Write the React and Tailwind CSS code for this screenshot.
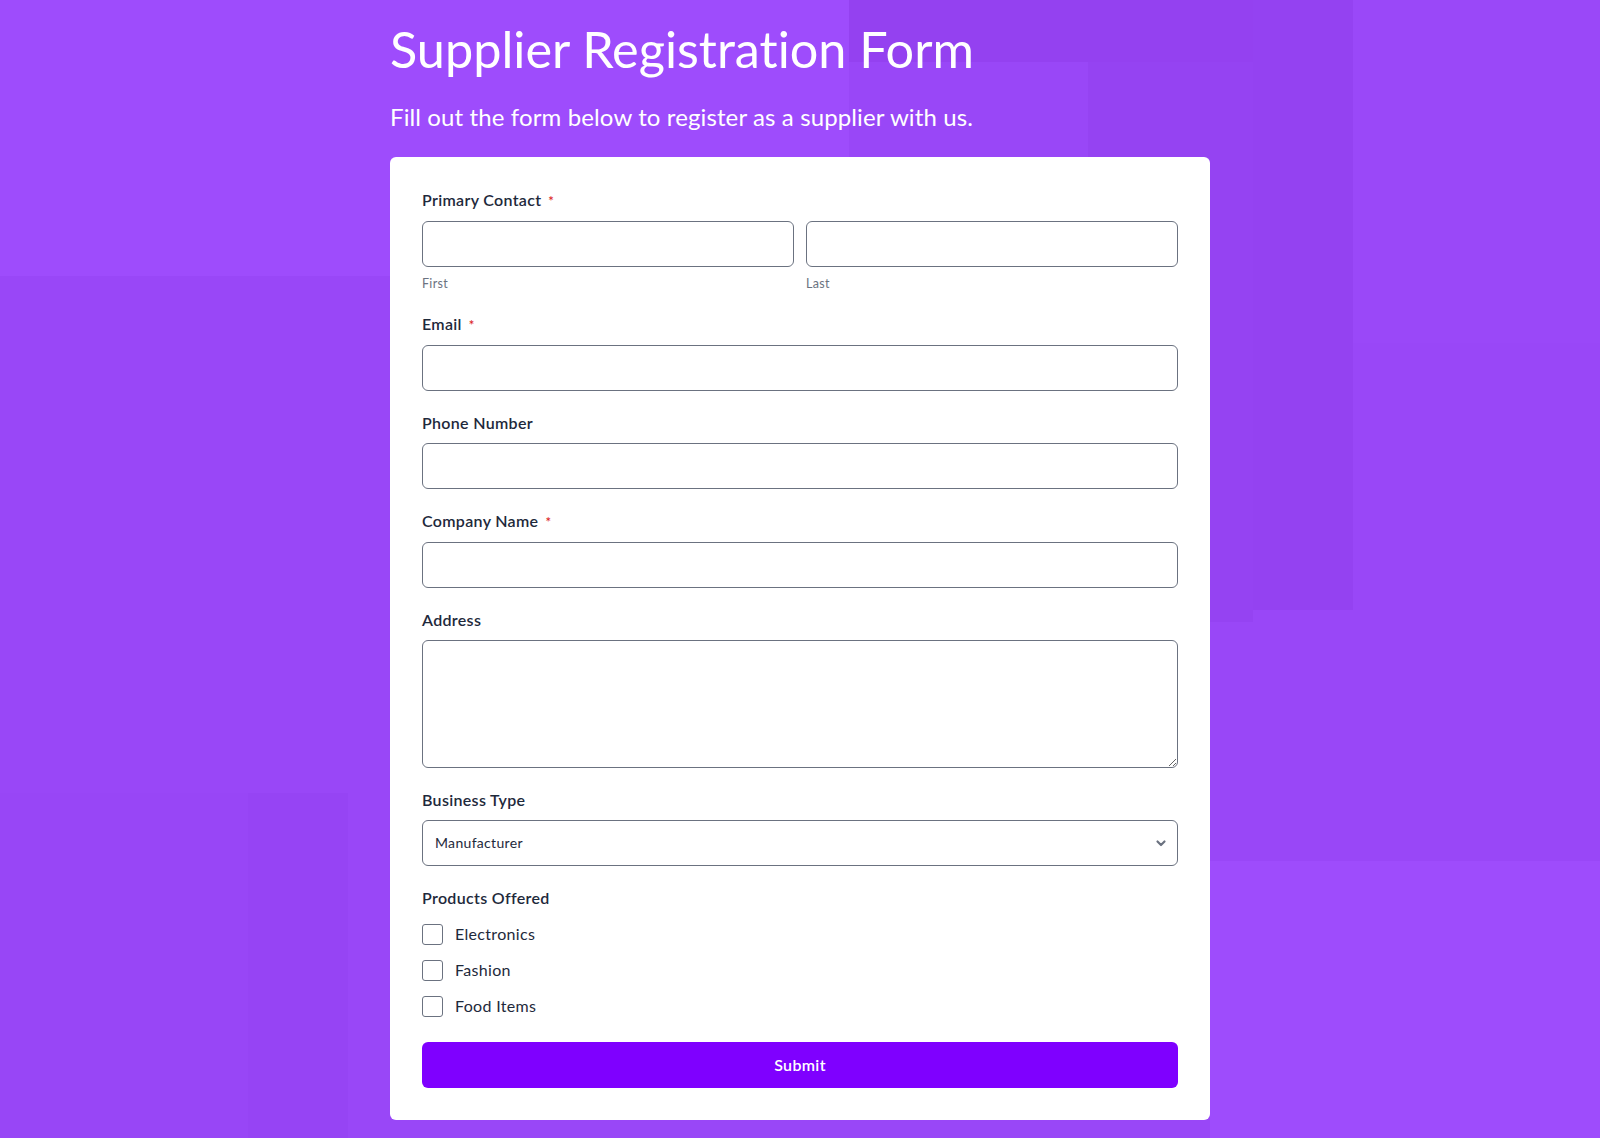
import React, { useState } from 'react';

const bgBlocks = [
  'left-0 top-0 w-[849px] h-[276px] bg-[#9e4cfc]',
  'left-[849px] top-0 w-[405px] h-[62px] bg-[#9441f0]',
  'left-[1088px] top-[62px] w-[165px] h-[560px] bg-[#9543f2]',
  'left-[1253px] top-0 w-[100px] h-[610px] bg-[#9442f1]',
  'left-[1353px] top-0 w-[247px] h-[343px] bg-[#9a48f8]',
  'left-0 top-[793px] w-[248px] h-[345px] bg-[#9846f6]',
  'left-[248px] top-[793px] w-[100px] h-[345px] bg-[#9644f4]',
  'left-[1210px] top-[861px] w-[390px] h-[277px] bg-[#9e4cfc]',
];

const Label = ({ children, required }) => (
  <label className="block mb-2 text-base leading-6 font-semibold text-[#1e293b]">
    {children}
    {required && <span className="ml-[7px] text-[13px] text-[#dc2626]">*</span>}
  </label>
);

const inputCls =
  'block w-full h-[46px] px-3 rounded-md border border-[#6b7280] bg-white text-sm text-[#1e293b] outline-none';

const SupplierForm = () => {
  const [products, setProducts] = useState({});

  const toggle = (name) => setProducts({ ...products, [name]: !products[name] });

  return (
    <div className="relative min-h-screen overflow-hidden bg-[#9947f7] font-['Lato',_'Noto_Sans',_sans-serif] tracking-[0.02em] [font-variant-ligatures:none]">
      {/* soft square pattern behind the form */}
      {bgBlocks.map((c) => (
        <div key={c} className={`absolute ${c}`} />
      ))}

      <div className="relative mx-auto w-[820px] pt-5 pb-5">
        <h1 className="text-[50.4px] leading-[58px] font-normal tracking-normal text-white">Supplier Registration Form</h1>
        <p className="mt-[23px] text-2xl leading-8 tracking-[0.005em] text-white">
          Fill out the form below to register as a supplier with us.
        </p>

        <form className="mt-[24px] bg-white rounded-md px-8 pt-[31px] pb-8" onSubmit={(e) => e.preventDefault()}>
          <div className="mb-5">
            <Label required>Primary Contact</Label>
            <div className="grid grid-cols-2 gap-3">
              <div>
                <input type="text" className={inputCls} />
                <div className="mt-[9px] text-[12.5px] leading-4 text-[#6b7280]">First</div>
              </div>
              <div>
                <input type="text" className={inputCls} />
                <div className="mt-[9px] text-[12.5px] leading-4 text-[#6b7280]">Last</div>
              </div>
            </div>
          </div>

          <div className="mb-5">
            <Label required>Email</Label>
            <input type="email" className={inputCls} />
          </div>

          <div className="mb-5">
            <Label>Phone Number</Label>
            <input type="tel" className={inputCls} />
          </div>

          <div className="mb-5">
            <Label required>Company Name</Label>
            <input type="text" className={inputCls} />
          </div>

          <div className="mb-5">
            <Label>Address</Label>
            <textarea className="block w-full h-32 px-3 py-2 rounded-md border border-[#6b7280] bg-white text-sm outline-none" />
          </div>

          <div className="mb-5">
            <Label>Business Type</Label>
            <div className="relative">
              <select className={`${inputCls} appearance-none pr-10`} defaultValue="Manufacturer">
                <option>Manufacturer</option>
                <option>Wholesaler</option>
                <option>Distributor</option>
                <option>Retailer</option>
              </select>
              <svg
                className="absolute right-[11px] top-1/2 -translate-y-1/2 pointer-events-none"
                width="12"
                height="12"
                viewBox="0 0 12 12"
                fill="none"
              >
                <path d="M2.5 4.5 6 8l3.5-3.5" stroke="#6b7280" strokeWidth="2.2" strokeLinecap="round" strokeLinejoin="round" />
              </svg>
            </div>
          </div>

          <div className="mb-6">
            <div className="mb-3 text-base leading-6 font-semibold text-[#1e293b]">Products Offered</div>
            <div className="flex flex-col gap-3">
              {['Electronics', 'Fashion', 'Food Items'].map((p) => (
                <label key={p} className="flex items-center h-6 cursor-pointer">
                  <input
                    type="checkbox"
                    checked={!!products[p]}
                    onChange={() => toggle(p)}
                    className="appearance-none w-[21px] h-[21px] rounded-[3px] border border-[#6b7280] bg-white checked:bg-[#7f00ff] checked:border-[#7f00ff]"
                  />
                  <span className="ml-3 text-base text-[#1e293b]">{p}</span>
                </label>
              ))}
            </div>
          </div>

          <button
            type="submit"
            className="block w-full h-[46px] rounded-md bg-[#7f00ff] text-white text-base font-semibold hover:bg-[#7000e0]"
          >
            Submit
          </button>
        </form>
      </div>
    </div>
  );
};

export default SupplierForm;
